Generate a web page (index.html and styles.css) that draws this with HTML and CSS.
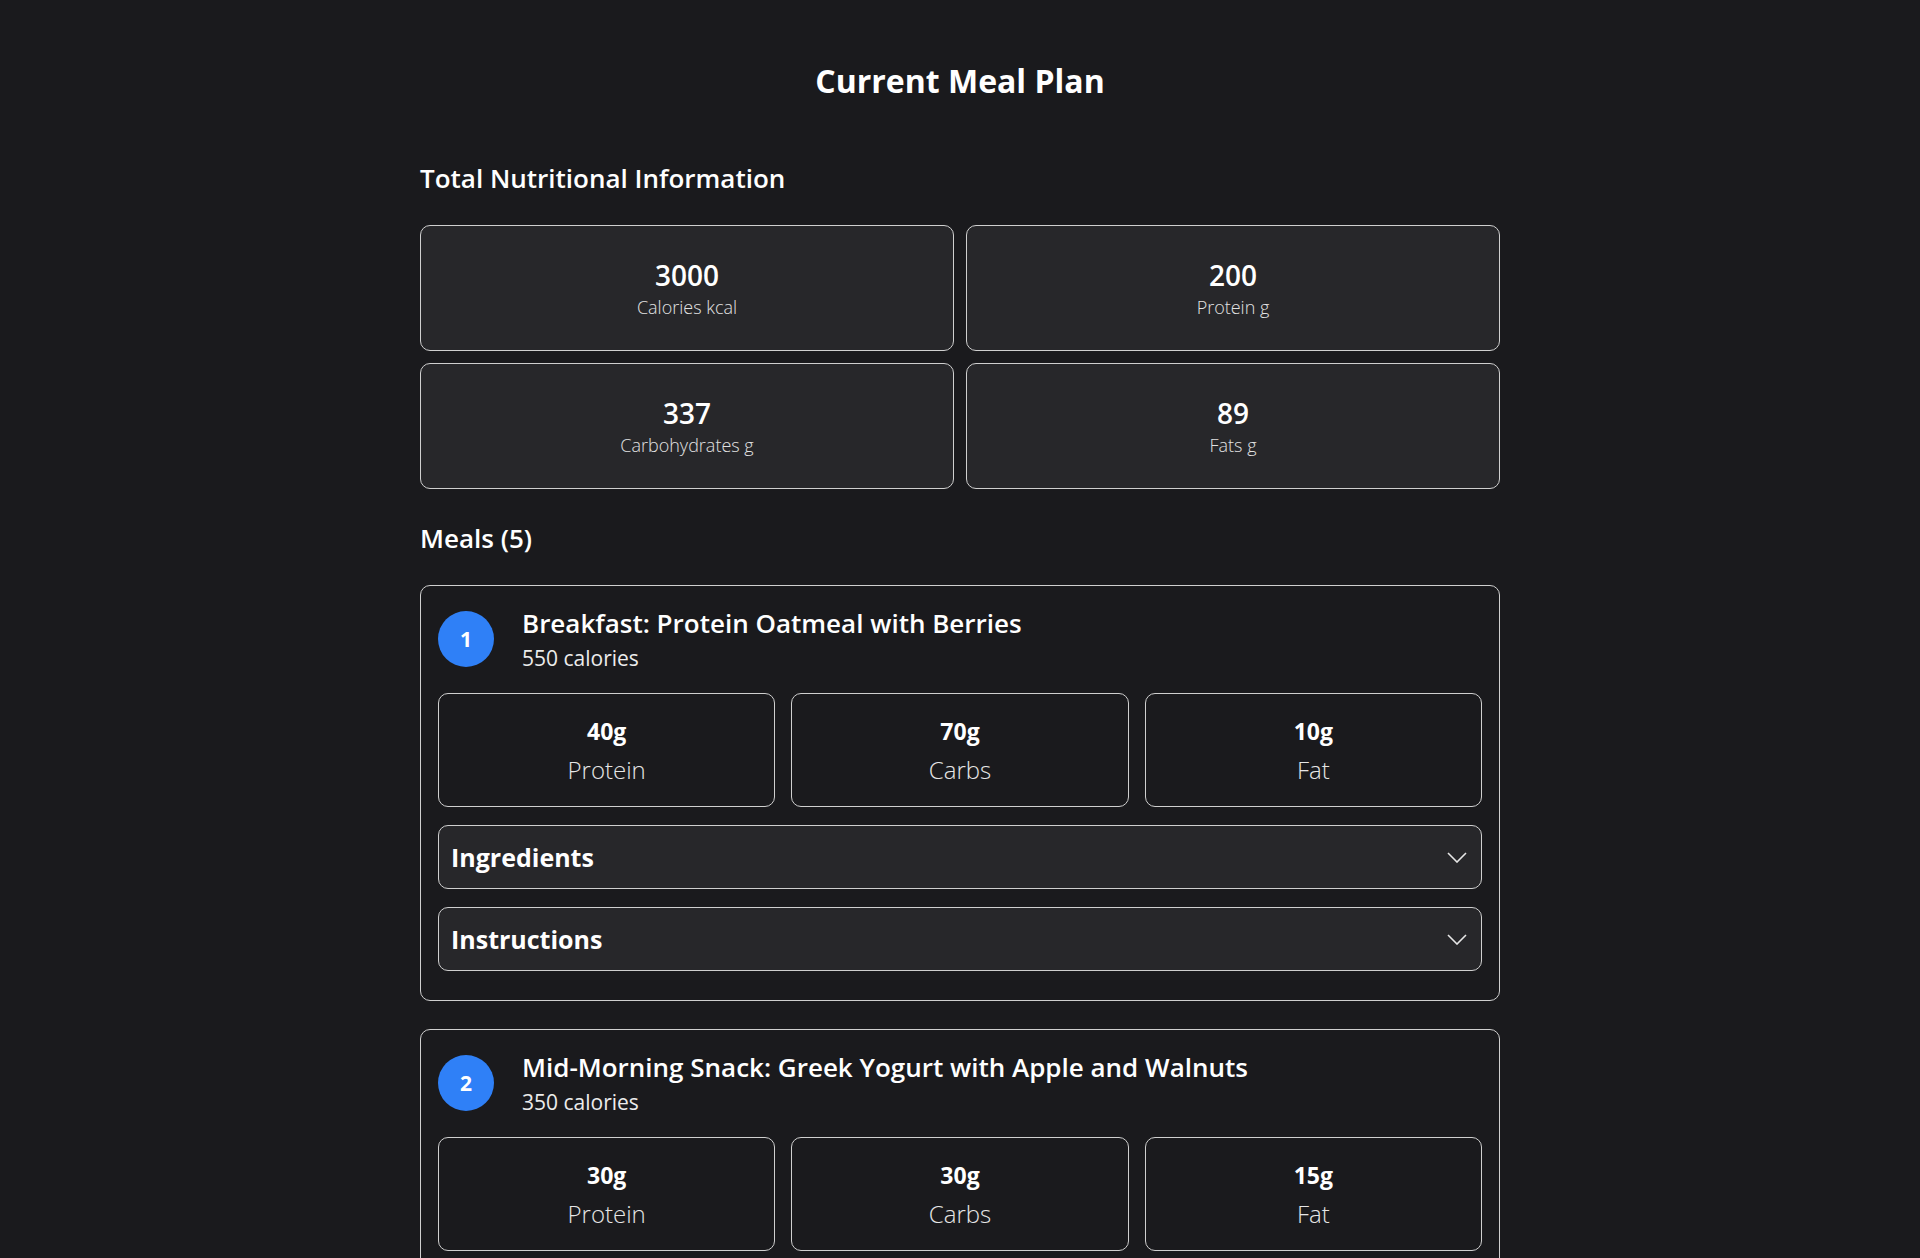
FILE: index.html
```html
<!DOCTYPE html>
<html lang="en">
<head>
<meta charset="utf-8">
<title>Current Meal Plan</title>
<link rel="stylesheet" href="styles.css">
</head>
<body>
<main class="page">
  <h1 class="page-title">Current Meal Plan</h1>

  <h2 class="section-title">Total Nutritional Information</h2>
  <div class="stats">
    <div class="stat"><div class="stat-value">3000</div><div class="stat-label">Calories kcal</div></div>
    <div class="stat"><div class="stat-value">200</div><div class="stat-label">Protein g</div></div>
    <div class="stat"><div class="stat-value">337</div><div class="stat-label">Carbohydrates g</div></div>
    <div class="stat"><div class="stat-value">89</div><div class="stat-label">Fats g</div></div>
  </div>

  <h2 class="section-title meals-title">Meals (5)</h2>
  <div class="meals">
    <section class="meal">
      <div class="meal-head">
        <div class="badge">1</div>
        <div class="meal-text">
          <div class="meal-title">Breakfast: Protein Oatmeal with Berries</div>
          <div class="meal-cal">550 calories</div>
        </div>
      </div>
      <div class="macros">
        <div class="macro"><div class="macro-value">40g</div><div class="macro-label">Protein</div></div>
        <div class="macro"><div class="macro-value">70g</div><div class="macro-label">Carbs</div></div>
        <div class="macro"><div class="macro-value">10g</div><div class="macro-label">Fat</div></div>
      </div>
      <button class="acc"><span class="acc-label">Ingredients</span><svg class="chev" width="20" height="11" viewBox="0 0 20 11"><path d="M1 1 L10 10 L19 1" fill="none" stroke="#e6e6e6" stroke-width="1.6"/></svg></button>
      <button class="acc"><span class="acc-label">Instructions</span><svg class="chev" width="20" height="11" viewBox="0 0 20 11"><path d="M1 1 L10 10 L19 1" fill="none" stroke="#e6e6e6" stroke-width="1.6"/></svg></button>
    </section>

    <section class="meal">
      <div class="meal-head">
        <div class="badge">2</div>
        <div class="meal-text">
          <div class="meal-title">Mid-Morning Snack: Greek Yogurt with Apple and Walnuts</div>
          <div class="meal-cal">350 calories</div>
        </div>
      </div>
      <div class="macros">
        <div class="macro"><div class="macro-value">30g</div><div class="macro-label">Protein</div></div>
        <div class="macro"><div class="macro-value">30g</div><div class="macro-label">Carbs</div></div>
        <div class="macro"><div class="macro-value">15g</div><div class="macro-label">Fat</div></div>
      </div>
      <button class="acc"><span class="acc-label">Ingredients</span><svg class="chev" width="20" height="11" viewBox="0 0 20 11"><path d="M1 1 L10 10 L19 1" fill="none" stroke="#e6e6e6" stroke-width="1.6"/></svg></button>
      <button class="acc"><span class="acc-label">Instructions</span><svg class="chev" width="20" height="11" viewBox="0 0 20 11"><path d="M1 1 L10 10 L19 1" fill="none" stroke="#e6e6e6" stroke-width="1.6"/></svg></button>
    </section>

    <section class="meal">
      <div class="meal-head">
        <div class="badge">3</div>
        <div class="meal-text">
          <div class="meal-title">Lunch: Grilled Chicken with Brown Rice and Vegetables</div>
          <div class="meal-cal">750 calories</div>
        </div>
      </div>
      <div class="macros">
        <div class="macro"><div class="macro-value">50g</div><div class="macro-label">Protein</div></div>
        <div class="macro"><div class="macro-value">80g</div><div class="macro-label">Carbs</div></div>
        <div class="macro"><div class="macro-value">24g</div><div class="macro-label">Fat</div></div>
      </div>
      <button class="acc"><span class="acc-label">Ingredients</span><svg class="chev" width="20" height="11" viewBox="0 0 20 11"><path d="M1 1 L10 10 L19 1" fill="none" stroke="#e6e6e6" stroke-width="1.6"/></svg></button>
      <button class="acc"><span class="acc-label">Instructions</span><svg class="chev" width="20" height="11" viewBox="0 0 20 11"><path d="M1 1 L10 10 L19 1" fill="none" stroke="#e6e6e6" stroke-width="1.6"/></svg></button>
    </section>

    <section class="meal">
      <div class="meal-head">
        <div class="badge">4</div>
        <div class="meal-text">
          <div class="meal-title">Afternoon Snack: Protein Shake with Banana</div>
          <div class="meal-cal">450 calories</div>
        </div>
      </div>
      <div class="macros">
        <div class="macro"><div class="macro-value">30g</div><div class="macro-label">Protein</div></div>
        <div class="macro"><div class="macro-value">47g</div><div class="macro-label">Carbs</div></div>
        <div class="macro"><div class="macro-value">16g</div><div class="macro-label">Fat</div></div>
      </div>
      <button class="acc"><span class="acc-label">Ingredients</span><svg class="chev" width="20" height="11" viewBox="0 0 20 11"><path d="M1 1 L10 10 L19 1" fill="none" stroke="#e6e6e6" stroke-width="1.6"/></svg></button>
      <button class="acc"><span class="acc-label">Instructions</span><svg class="chev" width="20" height="11" viewBox="0 0 20 11"><path d="M1 1 L10 10 L19 1" fill="none" stroke="#e6e6e6" stroke-width="1.6"/></svg></button>
    </section>

    <section class="meal">
      <div class="meal-head">
        <div class="badge">5</div>
        <div class="meal-text">
          <div class="meal-title">Dinner: Salmon with Sweet Potato and Broccoli</div>
          <div class="meal-cal">900 calories</div>
        </div>
      </div>
      <div class="macros">
        <div class="macro"><div class="macro-value">50g</div><div class="macro-label">Protein</div></div>
        <div class="macro"><div class="macro-value">110g</div><div class="macro-label">Carbs</div></div>
        <div class="macro"><div class="macro-value">24g</div><div class="macro-label">Fat</div></div>
      </div>
      <button class="acc"><span class="acc-label">Ingredients</span><svg class="chev" width="20" height="11" viewBox="0 0 20 11"><path d="M1 1 L10 10 L19 1" fill="none" stroke="#e6e6e6" stroke-width="1.6"/></svg></button>
      <button class="acc"><span class="acc-label">Instructions</span><svg class="chev" width="20" height="11" viewBox="0 0 20 11"><path d="M1 1 L10 10 L19 1" fill="none" stroke="#e6e6e6" stroke-width="1.6"/></svg></button>
    </section>
  </div>
</main>
</body>
</html>
```

FILE: styles.css
```css
* { box-sizing: border-box; }

body {
  margin: 0;
  background: #1a1a1d;
  color: #ffffff;
  font-family: "Open Sans", "Noto Sans", sans-serif;
}

.page {
  width: 1080px;
  margin: 0 auto;
  padding: 61px 0 40px;
}

.page-title {
  margin: 0 0 61px;
  font-size: 32px;
  line-height: 40px;
  font-weight: 700;
  text-align: center;
}

.section-title {
  margin: 0 0 31px;
  font-size: 26px;
  line-height: 32px;
  font-weight: 600;
}

.meals-title {
  margin-bottom: 31px;
}

.stats {
  display: grid;
  grid-template-columns: 1fr 1fr;
  gap: 12px;
  margin-bottom: 33px;
}

.stat {
  height: 126px;
  border: 1px solid #cfcfcf;
  border-radius: 10px;
  background: #27272a;
  display: flex;
  flex-direction: column;
  align-items: center;
  justify-content: center;
}

.stat-value {
  font-size: 28px;
  line-height: 34px;
  font-weight: 600;
}

.stat-label {
  margin-top: 3px;
  font-size: 18px;
  line-height: 24px;
  font-weight: 300;
  color: #e2e2e2;
}

.meals {
  display: flex;
  flex-direction: column;
  gap: 28px;
}

.meal {
  border: 1px solid #cfcfcf;
  border-radius: 10px;
  padding: 17px 17px 29px;
}

.meal-head {
  display: flex;
  align-items: center;
  gap: 28px;
  margin-bottom: 19px;
}

.badge {
  flex-shrink: 0;
  width: 56px;
  height: 56px;
  border-radius: 50%;
  background: #2f80f7;
  display: flex;
  align-items: center;
  justify-content: center;
  font-size: 21px;
  font-weight: 700;
}

.meal-title {
  font-size: 26px;
  line-height: 40px;
  font-weight: 600;
}

.meal-cal {
  font-size: 21px;
  line-height: 31px;
  color: #ececec;
}

.macros {
  display: grid;
  grid-template-columns: repeat(3, 1fr);
  gap: 16px;
  margin-bottom: 18px;
}

.macro {
  height: 114px;
  padding-top: 2px;
  border: 1px solid #cfcfcf;
  border-radius: 10px;
  display: flex;
  flex-direction: column;
  align-items: center;
  justify-content: center;
}

.macro-value {
  font-size: 23px;
  line-height: 32px;
  font-weight: 700;
}

.macro-label {
  margin-top: 6px;
  font-size: 24px;
  line-height: 34px;
  font-weight: 300;
  color: #e6e6e6;
}

.acc {
  width: 100%;
  height: 64px;
  border: 1px solid #cfcfcf;
  border-radius: 10px;
  background: #27272a;
  color: #ffffff;
  font-family: inherit;
  display: flex;
  align-items: center;
  justify-content: space-between;
  padding: 0 14px 0 12px;
  cursor: pointer;
}

.acc + .acc {
  margin-top: 18px;
}

.acc-label {
  font-size: 25px;
  font-weight: 700;
}

.chev {
  display: block;
}
```
